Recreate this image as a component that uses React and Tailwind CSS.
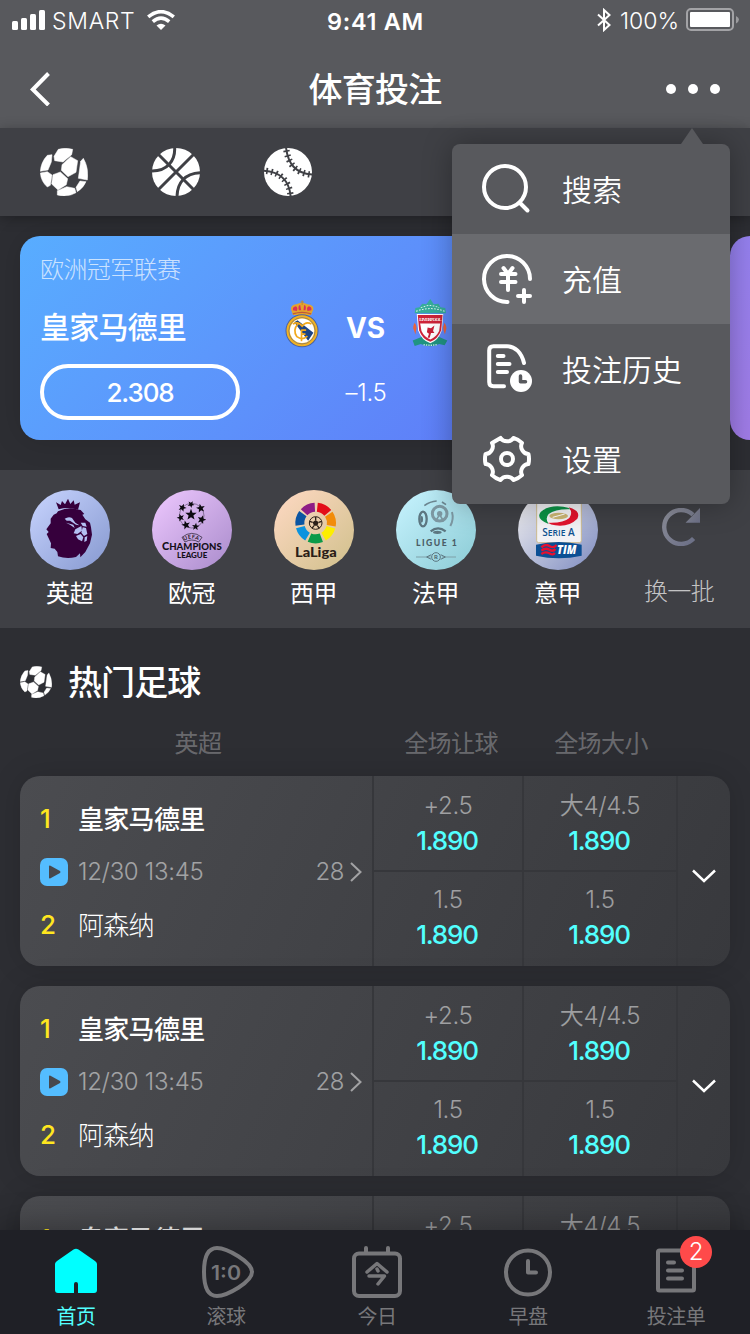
import React from "react";

const polar = (cx, cy, r, deg) => {
  const a = (deg * Math.PI) / 180;
  return [cx + r * Math.cos(a), cy + r * Math.sin(a)];
};
const fmt = (p) => p.map((n) => n.toFixed(2)).join(" ");

const starPoints = (cx, cy, r, rot = -90) =>
  Array.from({ length: 10 }, (_, i) =>
    fmt(polar(cx, cy, i % 2 ? r * 0.42 : r, rot + i * 36))
  ).join(" ");

const arcPath = (cx, cy, r, a, b) =>
  `M${fmt(polar(cx, cy, r, a))} A${r} ${r} 0 0 1 ${fmt(polar(cx, cy, r, b))}`;

const gearPath =
  [0, 1, 2, 3, 4, 5]
    .map((i) => {
      const c = -90 + i * 60;
      const s = polar(24, 24, 22, c - 17);
      const e = polar(24, 24, 22, c + 17);
      const m1 = polar(24, 24, 17, c - 13);
      const m2 = polar(24, 24, 17, c + 13);
      const mid = polar(24, 24, 22.6, c - 30);
      return `${i ? `Q${fmt(mid)} ` : "M"}${fmt(s)} C${fmt(m1)} ${fmt(m2)} ${fmt(e)}`;
    })
    .join(" ") + "Z";

/* ---------- sport icons ---------- */

function SoccerIcon({ className }) {
  return (
    <svg viewBox="0 0 144 144" className={className} fill="#fff" stroke="#fff" strokeWidth="1.500" strokeLinejoin="round">
      <path d="M42 25 L55 4 Q75 -2 98 4 L95 20 L69 42 L44 38Z" />
      <path d="M22 22 L36 20 L34 42 L24 66 L1 70 Q3 42 22 22Z" />
      <path d="M1 75 L22 71 L36 81 L31 112 L22 117 Q3 100 1 75Z" />
      <path d="M66 50 L92 26 L113 38 L108 73 L84 86 L64 67Z" />
      <path d="M39 80 L61 72 L83 92 L79 110 L54 126 L35 108Z" />
      <path d="M130 31 Q147 60 142 96 L115 91 L122 40Z" />
      <path d="M120 99 L138 101 Q130 120 112 131 L108 118Z" />
      <path d="M52 128 L80 116 L104 121 L108 134 Q82 149 52 141Z" />
    </svg>
  );
}

function BasketballIcon({ className }) {
  return (
    <svg viewBox="0 0 144 144" className={className} fill="none" stroke="#3f4045" strokeWidth="9">
      <circle cx="72" cy="72" r="72" fill="#fff" stroke="none" />
      <path d="M18 18 L126 126 M126 18 L18 126" />
      <path d="M68 -2 C70 38 46 70 -2 69" />
      <path d="M146 74 C98 76 76 104 75 146" />
    </svg>
  );
}

function BaseballIcon({ className }) {
  return (
    <svg viewBox="0 0 144 144" className={className} fill="none" stroke="#3f4045">
      <circle cx="72" cy="72" r="72" fill="#fff" stroke="none" />
      <g strokeWidth="6">
        <path d="M66 -2 C72 48 94 76 146 80" />
        <path d="M-2 68 C46 70 76 96 80 146" />
      </g>
      <g strokeWidth="19" strokeDasharray="5 10" strokeDashoffset="-8">
        <path d="M66 -2 C72 48 94 76 146 80" />
        <path d="M-2 68 C46 70 76 96 80 146" />
      </g>
    </svg>
  );
}

/* ---------- club crests ---------- */

function MadridCrest() {
  return (
    <svg viewBox="0 0 103 143" className="-mt-0.5 h-12 w-[34px]">
      <path d="M24 44 L18 26 Q18 14 34 12 Q52 2 68 12 Q86 14 86 26 L79 44Z" fill="#e4a42c" />
      <path d="M24 30 Q22 20 33 18 Q40 22 36 32Z M42 30 Q38 16 46 14 L49 30Z M56 30 L58 14 Q66 16 62 30Z M68 32 Q64 22 72 18 Q82 20 80 30Z" fill="#dc3156" />
      <path d="M52 0 V14 M47 5 H57" stroke="#c58b2a" strokeWidth="3" />
      <path d="M24 41 Q52 32 79 41" fill="none" stroke="#c0563a" strokeWidth="4" />
      <circle cx="51.500" cy="92" r="50" fill="#4a62a0" />
      <circle cx="51.500" cy="92" r="47" fill="#f2b221" />
      <circle cx="51.500" cy="92" r="40" fill="none" stroke="#6a6a78" strokeWidth="2" />
      <circle cx="51.500" cy="92" r="37" fill="#fff" />
      <path d="M28 66 L38 60 L86 98 L70 122Z" fill="#1d4483" />
      <g fill="none" stroke="#f2a91c" strokeWidth="5">
        <path d="M24 72 Q40 62 52 78 Q64 62 80 72" />
        <path d="M40 70 Q22 90 36 110 Q52 122 68 108" />
        <path d="M50 88 V124 M50 90 H64 M50 102 H62" strokeWidth="5" />
      </g>
    </svg>
  );
}

function LiverpoolCrest() {
  return (
    <svg viewBox="0 0 106 141" className="-mt-1 h-12 w-[36px]">
      <path d="M8 42 L10 26 L22 24 L30 14 L42 15 L54 0 L64 15 L78 14 L84 24 L98 26 L100 42Z" fill="#36ae9b" />
      <path d="M12 36 Q54 20 96 36 M26 26 Q54 12 80 26" stroke="#d9f1ec" strokeWidth="3" fill="none" strokeDasharray="5 4" />
      <path d="M2 122 L28 112 L80 112 L104 122 L96 136 L80 132 Q54 146 26 132 L8 138Z" fill="#209482" />
      <path d="M14 44 H92 L88 92 Q78 122 54 130 Q28 122 18 92Z" fill="#fff" />
      <path d="M17 47 H90 L86 92 Q76 118 54 126 Q30 118 21 92Z" fill="#cf2338" />
      <path d="M24 72 H83 L80 94 Q71 112 54 119 Q36 112 28 94Z" fill="#fff" />
      <text x="54" y="65" fontSize="14" fontWeight="700" fill="#fff" textAnchor="middle" textLength="66" fontFamily="Liberation Serif, serif">LIVERPOOL</text>
      <path d="M46 84 L56 86 L66 78 L62 94 L66 100 L56 100 L52 114 H46 L50 102 L44 98Z" fill="#c91f36" />
      <path d="M8 70 Q16 82 12 92 L10 104 L6 92 Q0 84 8 70Z M96 70 Q104 84 100 92 L97 104 L93 92 Q90 82 96 70Z" fill="#e9633c" />
      <path d="M34 134 Q54 138 74 134" stroke="#c6eee6" strokeWidth="4" strokeDasharray="4 3" fill="none" />
    </svg>
  );
}

/* ---------- league badges ---------- */

function PremierBadge() {
  return (
    <svg viewBox="0 0 240 240" className="size-20">
      <g fill="#36003c">
        <path d="M86 58 L78 37 L92 45 L96 33 L105 43 L114 26 L121 42 L131 31 L134 44 L150 37 L144 59 Q114 49 86 58Z" />
        <path d="M84 64 Q116 50 140 58 L152 60 L163 72 L157 74 L166 88 L180 98 L183 112 L186 134 L180 160 L166 186 L151 202 L150 190 L138 201 Q110 208 84 199 L82 186 L74 176 L62 174 L63 160 L50 132 L56 126 L49 118 L62 100 L62 86 L71 74 L80 70Z" />
      </g>
      <g fill="#b3c0f2">
        <path d="M104 86 Q116 78 126 84 L136 98 L148 106 L138 104 L120 92 L110 92Z" />
        <path d="M108 98 L130 104 L134 114 L120 104Z" />
        <path d="M152 98 L166 98 L170 110 L158 108Z" />
        <path d="M136 118 L154 108 L156 122 L142 132 L131 130Z" />
        <path d="M158 112 L168 114 L172 132 L162 138 L154 128Z" />
        <path d="M138 138 L152 132 L160 142 L156 154 L144 148Z" />
        <path d="M164 142 L172 138 L170 152 L163 156Z" />
      </g>
    </svg>
  );
}

function ChampionsBadge() {
  return (
    <svg viewBox="0 0 240 240" className="size-20">
      <circle cx="119" cy="77" r="37" fill="none" stroke="#1d1626" strokeWidth="2" opacity="0.600" />
      <g fill="#0c0a10">
        <polygon points={starPoints(117, 74, 18)} />
        <polygon points={starPoints(117, 43, 11, -60)} />
        <polygon points={starPoints(146, 55, 14, -30)} />
        <polygon points={starPoints(149, 89, 14, 0)} />
        <polygon points={starPoints(131, 110, 12, 60)} />
        <polygon points={starPoints(102, 105, 14, 110)} />
        <polygon points={starPoints(86, 83, 12, 180)} />
        <polygon points={starPoints(91, 53, 13, 220)} />
      </g>
      <path id="uefa-arc" d="M97 153 Q119 139 143 153" fill="none" />
      <path d="M90 142 Q119 118 150 142 M99 156 Q119 144 140 156 M90 142 L99 156 M150 142 L140 156" fill="none" stroke="#1d1626" strokeWidth="2" />
      <text fontSize="16" fontWeight="700" fill="#1a1420" fontFamily="Lato, sans-serif">
        <textPath href="#uefa-arc" textLength="44">UEFA</textPath>
      </text>
      <text x="30" y="181" fontSize="31" fontWeight="900" fill="#15101a" textLength="179" lengthAdjust="spacingAndGlyphs" fontFamily="Lato, sans-serif">
        C<tspan fontSize="27">HAMPIONS</tspan>
      </text>
      <text x="75" y="204" fontSize="20" fontWeight="900" fill="#15101a" textLength="91" lengthAdjust="spacingAndGlyphs" fontFamily="Lato, sans-serif">LEAGUE</text>
    </svg>
  );
}

const wheel = [
  ["#e30d19", -62],
  ["#f28c0a", -12],
  ["#fdee00", 38],
  ["#0b9a48", 91],
  ["#0b93de", 143],
  ["#0b55a2", 194],
  ["#8e1c86", 245],
];

function LaLigaBadge() {
  return (
    <svg viewBox="0 0 240 240" className="size-20">
      {wheel.map(([color, mid]) => (
        <path key={color} d={arcPath(125, 99, 47.5, mid - 22, mid + 22)} fill="none" stroke={color} strokeWidth="27" />
      ))}
      <circle cx="125" cy="99" r="19" fill="none" stroke="#2b2018" strokeWidth="3" />
      <path d="M125 90 L134 97 L130 107 H120 L116 97Z" fill="#2b2018" />
      <path d="M125 81 V90 M143 94 L134 97 M136 115 L130 107 M114 115 L120 107 M107 94 L116 97" stroke="#2b2018" strokeWidth="4" />
      <text x="63" y="201" fontSize="40" fontWeight="900" fill="#2a1d17" textLength="125" lengthAdjust="spacingAndGlyphs" fontFamily="Lato, sans-serif">LaLiga</text>
    </svg>
  );
}

function LigueBadge() {
  return (
    <svg viewBox="0 0 240 240" className="size-20">
      <g fill="none" stroke="#7d98a2">
        <circle cx="131" cy="71" r="22" strokeWidth="9" />
        <circle cx="131" cy="71" r="8" fill="#7d98a2" stroke="none" />
        <path d="M131 74 L118 94 M131 74 L143 94" strokeWidth="5" />
        <ellipse cx="81" cy="87" rx="11" ry="22" strokeWidth="7" stroke="#5c7680" />
        <ellipse cx="77" cy="88" rx="4" ry="10" fill="#5c7680" stroke="none" />
        <path d="M104 124 Q126 106 149 124" strokeWidth="7" stroke="#5c7680" />
        <ellipse cx="124" cy="127" rx="13" ry="5" fill="#5c7680" stroke="none" />
        <path d="M168 66 Q174 88 163 108" strokeWidth="6" />
        <path d="M85 47 Q102 34 122 33 M138 36 L150 44" strokeWidth="5" stroke="#6d8791" />
      </g>
      <text x="60" y="168" fontSize="26" fontWeight="900" fill="#4b5d66" textLength="122" fontFamily="Lato, sans-serif">LIGUE 1</text>
      <path d="M60 201 H104 M138 201 H180" stroke="#7fa0a8" strokeWidth="3" />
      <path d="M92 201 L106 194 M92 201 L106 208 M148 201 L134 194 M148 201 L134 208" stroke="#5c7680" strokeWidth="3" />
      <circle cx="120" cy="201" r="13" fill="none" stroke="#5c7680" strokeWidth="3" />
      <text x="120" y="208" fontSize="18" fontWeight="700" fill="#4b626b" textAnchor="middle" fontFamily="Lato, sans-serif">R</text>
    </svg>
  );
}

function SerieBadge() {
  return (
    <svg viewBox="0 0 240 240" className="size-20">
      <rect x="56" y="12" width="134" height="146" rx="6" fill="#f2f2f5" stroke="#cdbb8e" strokeWidth="3" />
      <ellipse cx="122" cy="78" rx="50" ry="24" fill="none" stroke="#fff" strokeWidth="4" />
      <ellipse cx="122" cy="78" rx="28" ry="10" fill="#cbb673" />
      <path d="M104 82 L140 72" stroke="#fff" strokeWidth="3" />
      <path d="M92 102 Q52 86 68 66 Q92 44 136 50 Q152 52 160 58 Q112 56 92 72 Q80 86 92 102Z" fill="#0c9246" />
      <path d="M152 52 Q190 62 178 86 Q152 112 112 106 Q98 104 90 98 Q136 100 154 84 Q166 68 152 52Z" fill="#e2142d" />
      <text x="73" y="137" fontSize="33" fontWeight="600" fill="#0f5290" textLength="97" lengthAdjust="spacingAndGlyphs" fontFamily="Open Sans, sans-serif">
        S<tspan fontSize="28">ERIE</tspan> A
      </text>
      <path d="M54 164 Q122 148 191 164 V197 Q122 212 54 197Z" fill="#0b4f94" />
      <path d="M70 172 Q82 160 94 168 T116 165 M70 182 Q82 172 94 179 T112 177 M70 192 Q82 183 94 190 T110 188" fill="none" stroke="#e8102e" strokeWidth="7" />
      <text x="117" y="193" fontSize="34" fontWeight="800" fontStyle="italic" fill="#fff" textLength="58" lengthAdjust="spacingAndGlyphs" fontFamily="Open Sans, sans-serif">TIM</text>
    </svg>
  );
}

function RefreshIcon() {
  return (
    <svg viewBox="0 0 113 113" className="ml-0.5 h-[38px] w-[38px]">
      <defs>
        <linearGradient id="refresh" x1="0" y1="0" x2="1" y2="1">
          <stop offset="0" stopColor="#8b8d98" />
          <stop offset="1" stopColor="#6b6f86" />
        </linearGradient>
      </defs>
      <path d="M94 91 A50.500 50.500 0 1 1 92 20" fill="none" stroke="url(#refresh)" strokeWidth="13" />
      <path d="M113 0 V44 H70Z" fill="url(#refresh)" />
    </svg>
  );
}

/* ---------- dropdown icons ---------- */

const stroke = { fill: "none", stroke: "#fff", strokeWidth: 4, strokeLinecap: "round", strokeLinejoin: "round" };

function SearchIcon() {
  return (
    <svg viewBox="0 0 54 54" className="size-[54px]" {...stroke}>
      <circle cx="25" cy="25" r="21" />
      <path d="M40 41 L47.500 48.500" />
    </svg>
  );
}

function RechargeIcon() {
  return (
    <svg viewBox="0 0 54 54" className="size-[54px]" {...stroke}>
      <path d="M50 27 A23 23 0 1 0 27.500 50" />
      <path d="M23.500 16 L28 22 L32.500 16 M21 22 H35.500 M21 30 H35.500 M28 22 V38 M44 38 V50 M38 44 H50" />
    </svg>
  );
}

function HistoryIcon() {
  return (
    <svg viewBox="0 0 54 54" className="size-[54px]" {...stroke}>
      <path d="M44 21 C41.500 10.500 35 4.200 27 4.200 H13.500 Q9.200 4.200 9.200 8.500 V40 Q9.200 44.200 13.500 44.200 H24" />
      <path d="M17.800 14 H23.500 M17.800 22 H29.500 M17.800 30 H27" />
      <circle cx="41" cy="39" r="13" fill="#58595d" stroke="none" />
      <circle cx="41" cy="39" r="11" fill="#fff" stroke="none" />
      <path d="M40.500 34 V39.800 H45.500" stroke="#58595d" strokeWidth="3.500" />
    </svg>
  );
}

function GearIcon() {
  return (
    <svg viewBox="-3 -3 54 54" className="size-[54px]" {...stroke}>
      <path d={gearPath} />
      <circle cx="24" cy="24" r="6" />
    </svg>
  );
}

const menu = [
  { label: "搜索", Icon: SearchIcon },
  { label: "充值", Icon: RechargeIcon, active: true },
  { label: "投注历史", Icon: HistoryIcon },
  { label: "设置", Icon: GearIcon },
];

/* ---------- tab bar icons ---------- */

const grey = { fill: "none", stroke: "#77777a", strokeWidth: 4, strokeLinecap: "round", strokeLinejoin: "round" };

const HomeIcon = () => (
  <svg viewBox="0 0 56 56" className="size-14">
    <path d="M25.500 5.500 Q28 4 30.500 5.500 L47 17 Q49 18.500 49 20 V46 Q49 49 46 49 H30 V40 Q30 38 28 38 Q26 38 26 40 V49 H10 Q7 49 7 46 V20 Q7 18.500 9 17Z" fill="#00ffff" />
  </svg>
);

const LiveIcon = () => (
  <svg viewBox="0 0 56 56" className="size-14" {...grey}>
    <path d="M6 28 C6 12 10 4 19 4 C29 4 54 18 54 28 C54 38 29 52 19 52 C10 52 6 44 6 28Z" />
    <text x="13" y="36" fontSize="20" fontWeight="600" fill="#77777a" stroke="none" textLength="30" lengthAdjust="spacingAndGlyphs" fontFamily="Inter, sans-serif">1:0</text>
  </svg>
);

const TodayIcon = () => (
  <svg viewBox="0 0 56 56" className="size-14" {...grey}>
    <rect x="5" y="9.500" width="46" height="42.500" rx="5" />
    <path d="M17 4 V9 M39 4 V9" />
    <path d="M18 28 L28 19.500 L38 28 M20 32 H35.500 L29 40 M28 25 L29 27" strokeWidth="3.500" />
  </svg>
);

const ClockIcon = () => (
  <svg viewBox="0 0 56 56" className="size-14" {...grey}>
    <circle cx="28" cy="28.500" r="22" />
    <path d="M28 17 V28.500 H36" />
  </svg>
);

const SlipIcon = () => (
  <svg viewBox="0 0 56 56" className="size-14" {...grey}>
    <rect x="10" y="6.500" width="36" height="40" rx="1.500" />
    <path d="M20 18.500 H26 M20 26.500 H34 M20 34.500 H34" />
  </svg>
);

const tabs = [
  { label: "首页", Icon: HomeIcon, active: true },
  { label: "滚球", Icon: LiveIcon },
  { label: "今日", Icon: TodayIcon },
  { label: "早盘", Icon: ClockIcon },
  { label: "投注单", Icon: SlipIcon, badge: 2 },
];

const leagues = [
  { label: "英超", Badge: PremierBadge, bg: "bg-linear-135 from-[#c9d5ff] to-[#8698cf]" },
  { label: "欧冠", Badge: ChampionsBadge, bg: "bg-linear-135 from-[#efc9ff] to-[#a98bcb]" },
  { label: "西甲", Badge: LaLigaBadge, bg: "bg-linear-135 from-[#ffd9c4] to-[#d0c08b]" },
  { label: "法甲", Badge: LigueBadge, bg: "bg-linear-135 from-[#c8f4ff] to-[#8bcbd5]" },
  { label: "意甲", Badge: SerieBadge, bg: "bg-linear-135 from-[#f7f4f1] to-[#7f8cc0]" },
];

function StatusBar() {
  return (
    <div className="grid h-10 grid-cols-[1fr_auto_1fr] items-center pr-[11px] pl-3 text-[23px]">
      <div className="flex items-center">
        <svg viewBox="0 0 33 20" className="h-5 w-[33px]" fill="#fff">
          <rect x="0" y="11" width="6" height="9" rx="1.500" />
          <rect x="9" y="8" width="6" height="12" rx="1.500" />
          <rect x="18" y="4" width="6" height="16" rx="1.500" />
          <rect x="27" y="0" width="6" height="20" rx="1.500" />
        </svg>
        <span className="ml-[7px] w-[83px] pt-0.5 leading-[38px] font-[350] tracking-[0.7px]">SMART</span>
        <svg viewBox="0 0 28 20" className="ml-3 h-5 w-7" fill="none" stroke="#fff" strokeWidth="3.600">
          <path d="M1.200 6.800 Q14 -3.500 26.800 6.800" />
          <path d="M5.800 11.600 Q14 4.800 22.200 11.600" />
          <path d="M9.500 15.600 Q14 11.800 18.500 15.600 L14 20Z" fill="#fff" stroke="none" />
        </svg>
      </div>
      <div className="pt-[3px] text-[23.500px] leading-[37px] font-semibold tracking-[0.7px]">9:41 AM</div>
      <div className="flex items-center justify-end">
        <svg viewBox="0 0 14 24" className="h-6 w-3.5" fill="none" stroke="#fff" strokeWidth="2">
          <path d="M1 6.500 L12.500 17 L7 22 V2 L12.500 7 L1 17.500" />
        </svg>
        <span className="ml-[9px] pt-0.5 leading-[38px] font-[350]">100%</span>
        <svg viewBox="0 0 53 24" className="ml-[7px] h-6 w-[53px]">
          <rect x="1" y="1" width="46" height="21" rx="4" fill="none" stroke="#a3a3a6" strokeWidth="2" />
          <rect x="4" y="4" width="40" height="15" rx="1" fill="#fff" />
          <path d="M50 8 Q53 9.500 53 11.500 Q53 13.500 50 15.500Z" fill="#9b9b9e" />
        </svg>
      </div>
    </div>
  );
}

function Header() {
  return (
    <header className="h-32 shrink-0 bg-[#58595d]">
      <StatusBar />
      <div className="flex h-[88px] items-center justify-between px-[30px] pt-2.5">
        <svg viewBox="0 0 54 34" className="h-[34px] w-[54px]" fill="none" stroke="#fff" strokeWidth="4">
          <path d="M18.500 1.500 L2.800 17.500 L18.500 33" />
        </svg>
        <h1 className="pt-px text-[34px] leading-[50px] font-medium tracking-[-0.8px]">体育投注</h1>
        <svg viewBox="0 0 54 10" className="h-2.5 w-[54px]" fill="#fff">
          <circle cx="5" cy="5" r="5" />
          <circle cx="27" cy="5" r="5" />
          <circle cx="49" cy="5" r="5" />
        </svg>
      </div>
    </header>
  );
}

function Dropdown() {
  return (
    <div className="absolute top-36 right-5 z-20 w-[278px] rounded-lg bg-[#58595d] shadow-[0_0_30px_rgba(0,0,0,0.3)]">
      <svg viewBox="0 0 22 16" className="absolute -top-4 right-[27px] h-4 w-[22px]" fill="#58595d">
        <path d="M0 16 L11 0 L22 16Z" />
      </svg>
      {menu.map(({ label, Icon, active }) => (
        <div key={label} className={active ? "flex h-[90px] items-center bg-[#6a6b6f] pl-7" : "flex h-[90px] items-center pl-7"}>
          <Icon />
          <span className="ml-7 pt-0.5 text-[30px] leading-[88px] font-[350]">{label}</span>
        </div>
      ))}
    </div>
  );
}

function Banner() {
  return (
    <section className="flex h-[254px] shrink-0 gap-5 overflow-hidden pt-5 pl-5">
      <div className="h-[204px] w-[690px] shrink-0 rounded-[20px] bg-linear-135 from-[#58adff] to-[#606bf5] px-5 pt-4 shadow-[0_0_30px_rgba(0,0,0,0.15)]">
        <p className="h-[34px] text-[24px] leading-9 font-light tracking-[-0.6px] text-white/70">欧洲冠军联赛</p>
        <div className="flex h-[78px] items-center">
          <h2 className="w-[245px] pt-1 text-[30px] leading-[74px] font-medium tracking-[-0.8px]">皇家马德里</h2>
          <MadridCrest />
          <span className="w-[93px] pt-1.5 text-center text-[28px] font-bold">VS</span>
          <LiverpoolCrest />
        </div>
        <div className="flex items-center">
          <div className="flex h-14 w-[200px] items-center justify-center rounded-full border-4 border-white pt-px text-[26px] font-medium tracking-[-1.1px]">2.308</div>
          <span className="ml-[76px] w-[100px] pt-0.5 text-center text-[24px] font-light tracking-[-0.3px]">–1.5</span>
        </div>
      </div>
      <div className="h-[204px] w-[690px] shrink-0 rounded-[20px] bg-linear-170 from-[#9581f0] to-[#a87ae4]" />
    </section>
  );
}

function Leagues() {
  return (
    <section className="flex h-[158px] shrink-0 gap-[42px] bg-[#3f4045] pt-5 pl-[30px]">
      {leagues.map(({ label, Badge, bg }) => (
        <div key={label} className="flex w-20 flex-col items-center">
          <div className={`size-20 overflow-hidden rounded-full ${bg}`}>
            <Badge />
          </div>
          <span className="mt-1.5 mr-px text-[24px] leading-9 tracking-[-0.6px]">{label}</span>
        </div>
      ))}
      <div className="flex w-20 flex-col items-center pt-[18px]">
        <RefreshIcon />
        <span className="mt-[28px] mr-0.5 text-[24px] leading-9 font-light tracking-[-0.6px] whitespace-nowrap text-white/70">换一批</span>
      </div>
    </section>
  );
}

function Odds({ line, second }) {
  return (
    <div className={second ? "h-24 border-t-2 border-[#36373b] pt-[11px] text-center" : "h-[94px] pt-[13px] text-center"}>
      <div className="h-[34px] text-[24px] leading-[34px] font-[350] tracking-[-0.3px] text-white/50">{line}</div>
      <div className="mr-0.5 h-9 text-[26px] leading-9 font-medium tracking-[-1.2px] text-[#52ffff]">1.890</div>
    </div>
  );
}

function MatchCard() {
  return (
    <article className="grid h-[190px] shrink-0 grid-cols-[352px_150px_154px_54px] overflow-hidden rounded-[20px] bg-linear-115 from-[#4b4c50] to-[#38393d] shadow-[0_0_30px_rgba(0,0,0,0.15)]">
      <div className="grid grid-cols-[38px_1fr_auto] grid-rows-[52px_52px_52px] items-center pt-[18px] pr-2.5 pl-5">
        <span className="pb-[3px] text-[26px] font-medium text-[#ffe61f]">1</span>
        <span className="col-span-2 text-[26px] leading-[52px] font-medium tracking-[-0.7px]">皇家马德里</span>
        <svg viewBox="0 0 28 28" className="size-7">
          <rect width="28" height="28" rx="7" fill="#54bdff" />
          <path d="M9 8.500 Q9 7 10.500 7.800 L20 13 Q21 14 20 15 L10.500 20.300 Q9 21 9 19.500Z" fill="#47484d" />
        </svg>
        <span className="text-[24px] font-[350] tracking-[-0.3px] text-white/50">12/30 13:45</span>
        <span className="flex items-center gap-1.5 text-[24px] font-[350] tracking-[-0.5px] text-white/50">
          28
          <svg viewBox="0 0 12 20" className="h-5 w-3" fill="none" stroke="#a2a2a4" strokeWidth="2">
            <path d="M1 1 L10.500 10 L1 19" />
          </svg>
        </span>
        <span className="pt-px text-[26px] font-medium text-[#ffe61f]">2</span>
        <span className="col-span-2 pt-1 text-[26px] leading-[48px] font-light tracking-[-0.7px]">阿森纳</span>
      </div>
      <div className="border-l-2 border-[#36373b]">
        <Odds line="+2.5" />
        <Odds line="1.5" second />
      </div>
      <div className="border-l-2 border-[#36373b]">
        <Odds line="大4/4.5" />
        <Odds line="1.5" second />
      </div>
      <div className="flex items-center justify-center border-l-2 border-[#36373b] pt-2.5">
        <svg viewBox="0 0 24 14" className="mr-px h-3.5 w-6" fill="none" stroke="#fff" strokeWidth="2.500">
          <path d="M1 1.500 L12 12 L23 1.500" />
        </svg>
      </div>
    </article>
  );
}

function HotMatches() {
  return (
    <section className="flex flex-col px-5 pt-5">
      <div className="flex h-[68px] items-center">
        <SoccerIcon className="size-8" />
        <h2 className="ml-4 pt-0.5 text-[34px] leading-[66px] font-medium tracking-[-0.9px]">热门足球</h2>
      </div>
      <div className="grid h-[54px] grid-cols-[356px_150px_150px] pt-px text-center text-[24px] leading-[54px] tracking-[-0.6px] text-white/30">
        <span>英超</span>
        <span>全场让球</span>
        <span>全场大小</span>
      </div>
      <div className="mt-1.5 flex flex-col gap-5">
        <MatchCard />
        <MatchCard />
        <MatchCard />
      </div>
    </section>
  );
}

function TabBar() {
  return (
    <nav className="relative z-10 grid h-[104px] shrink-0 grid-cols-[152px_148px_154px_148px_148px] bg-[#1f2026] shadow-[0_-4px_30px_rgba(0,0,0,0.3)]">
      {tabs.map(({ label, Icon, active, badge }) => (
        <div key={label} className="flex flex-col items-center pt-3.5">
          <div className="relative">
            <Icon />
            {badge && (
              <span className="absolute -top-2 -right-2 flex size-8 items-center justify-center rounded-full bg-[#ff4a4a] text-[24px] leading-8 font-[350]">{badge}</span>
            )}
          </div>
          <span className={active ? "pt-px text-[20px] leading-8 tracking-[-0.5px] text-[#52ffff]" : "pt-px text-[20px] leading-8 tracking-[-0.5px] text-[#77777a]"}>{label}</span>
        </div>
      ))}
    </nav>
  );
}

export default function App() {
  return (
    <div className="relative flex h-[1334px] w-[750px] flex-col overflow-hidden bg-[#2d2e33] font-['Inter','Noto_Sans_CJK_SC',sans-serif] text-white">
      <Header />
      <div className="relative flex h-[88px] shrink-0 gap-16 bg-[#3f4045] pt-5 pl-10 shadow-[0_2px_12px_rgba(0,0,0,0.3)]">
        <SoccerIcon className="size-12" />
        <BasketballIcon className="size-12" />
        <BaseballIcon className="size-12" />
      </div>
      <Dropdown />
      <main className="flex min-h-0 flex-1 flex-col overflow-hidden">
        <Banner />
        <Leagues />
        <HotMatches />
      </main>
      <TabBar />
    </div>
  );
}
